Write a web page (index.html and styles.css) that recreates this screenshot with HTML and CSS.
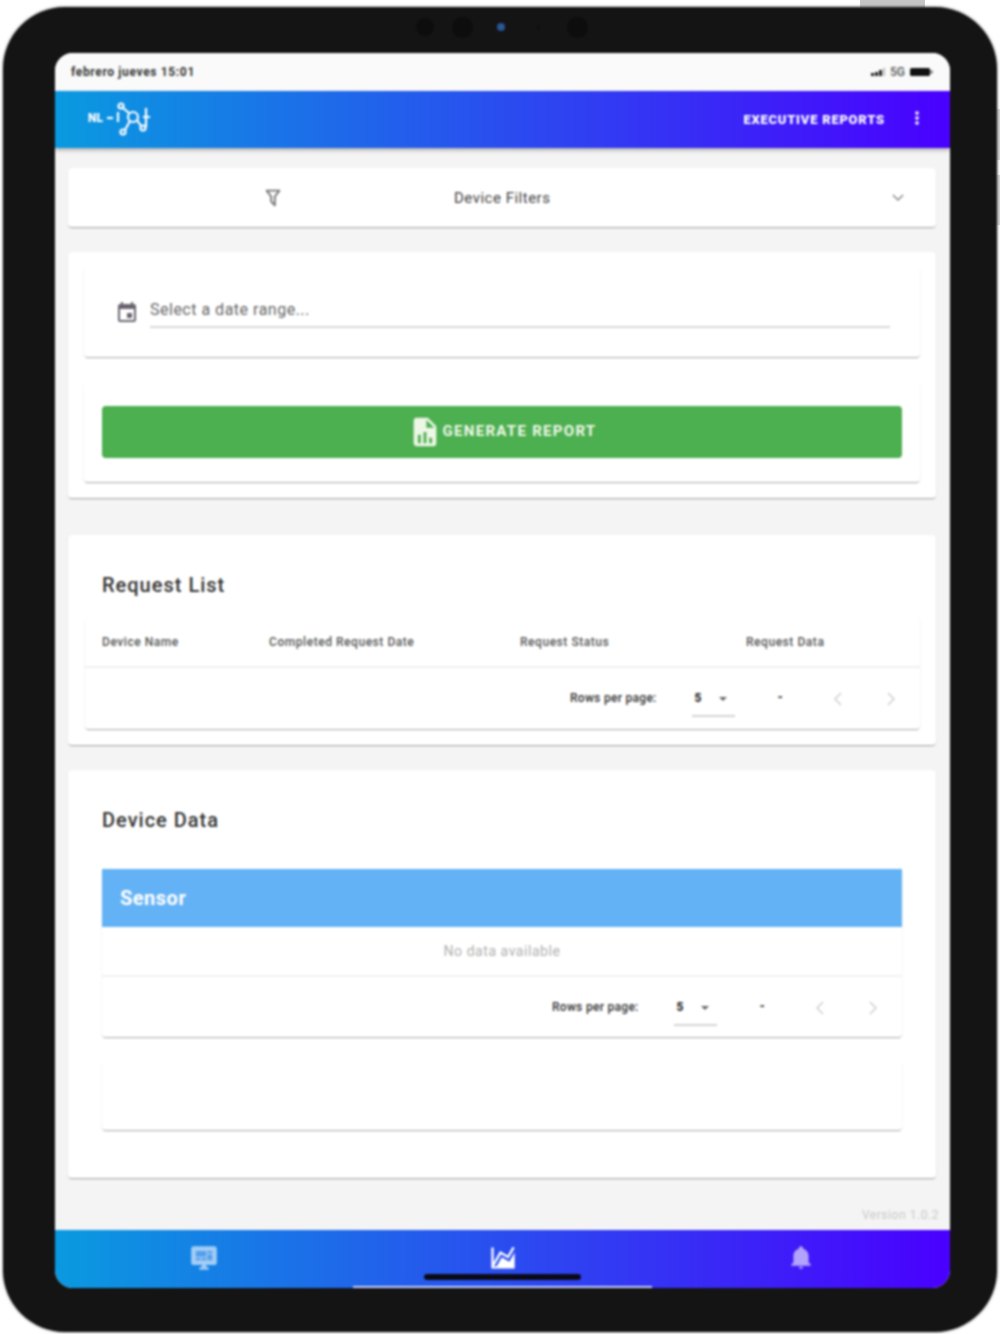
FILE: index.html
```html
<!DOCTYPE html>
<html lang="en">
<head>
    <meta charset="UTF-8">
    <meta name="viewport" content="width=device-width, initial-scale=1.0">
    <title>Executive Reports</title>
    <link rel="stylesheet" href="styles.css">
</head>
<body>
    <div class="btn-top"></div>
    <div class="btn-side btn-side-a"></div>
    <div class="btn-side btn-side-b"></div>

    <div class="tablet">
        <div class="camera">
            <span class="lens lens-left"></span>
            <span class="lens lens-mid"></span>
            <span class="lens-blue"></span>
            <span class="lens-tiny"></span>
            <span class="lens lens-right"></span>
        </div>

        <div class="screen">
            <div class="status-bar">
                <span>febrero jueves 15:01</span>
                <div class="status-right">
                    <svg class="signal" viewBox="0 0 14 8" width="14" height="8"><path d="M0 5h3v3H0zM4 4h3v4H4zM8 2h3v6H8z" fill="#222"/><path d="M12 0h2v8h-2z" fill="#bbb"/></svg>
                    <span class="five-g">5G</span>
                    <svg viewBox="0 0 23 8" width="23" height="8"><rect width="20" height="8" rx="1.5" fill="#111"/><rect x="20.5" y="2.5" width="2" height="3" fill="#555"/></svg>
                </div>
            </div>

            <header class="app-bar">
                <div class="logo">
                    <span class="logo-nl">NL</span>
                    <svg viewBox="0 0 48 36" width="48" height="36" fill="none" stroke="#fff" stroke-width="2.2">
                        <path d="M3 18h6"/>
                        <path d="M14 12v10"/>
                        <circle cx="17" cy="6" r="2.5"/>
                        <circle cx="29" cy="17" r="5"/>
                        <circle cx="19" cy="32" r="2.5"/>
                        <circle cx="39" cy="28" r="2.5"/>
                        <path d="M19 8l6 5M26 21l-5 9M33 20l4 6M42 8v19M39 17h7"/>
                    </svg>
                </div>
                <div class="app-bar-right">
                    <span class="app-title">EXECUTIVE REPORTS</span>
                    <svg class="menu-dots" viewBox="0 0 4 14" width="4" height="14" fill="#fff"><circle cx="2" cy="2" r="1.8"/><circle cx="2" cy="7" r="1.8"/><circle cx="2" cy="12" r="1.8"/></svg>
                </div>
            </header>

            <main class="content">
                <section class="card filter-panel">
                    <svg class="filter-icon" viewBox="0 0 24 24" width="22" height="22"><path fill="#757575" d="M15,19.88C15.04,20.18 14.94,20.5 14.71,20.71C14.32,21.1 13.69,21.1 13.3,20.71L9.29,16.7C9.06,16.47 8.96,16.16 9,15.87V10.75L4.21,4.62C3.87,4.19 3.95,3.56 4.38,3.22C4.57,3.08 4.78,3 5,3V3H19V3C19.22,3 19.43,3.08 19.62,3.22C20.05,3.56 20.13,4.19 19.79,4.62L15,10.75V19.88M7.04,5L11,10.06V15.58L13,17.58V10.05L16.96,5H7.04Z"/></svg>
                    <span class="filter-label">Device Filters</span>
                    <svg class="filter-chevron" viewBox="0 0 12 8" width="12" height="8" fill="none" stroke="#8a8a8a" stroke-width="1.5"><path d="M1 1l5 5 5-5"/></svg>
                </section>

                <section class="card report-card">
                    <div class="card date-card">
                        <svg viewBox="0 0 24 24" width="24" height="24"><path fill="#6b6470" d="M17 12h-5v5h5v-5zM16 1v2H8V1H6v2H5c-1.11 0-1.99.9-1.99 2L3 19c0 1.1.89 2 2 2h14c1.1 0 2-.9 2-2V5c0-1.1-.9-2-2-2h-1V1h-2zm3 18H5V8h14v11z"/></svg>
                        <div class="date-field">Select a date range...</div>
                    </div>
                    <div class="card button-card">
                        <button class="generate-btn">
                            <svg viewBox="0 0 24 24" width="34" height="34"><path fill="#eef7e6" d="M13,9H18.5L13,3.5V9M6,2H14L20,8V20A2,2 0 0,1 18,22H6C4.89,22 4,21.1 4,20V4C4,2.89 4.89,2 6,2M7,20H9V14H7V20M11,20H13V12H11V20M15,20H17V16H15V20Z"/></svg>
                            <span>GENERATE REPORT</span>
                        </button>
                    </div>
                </section>

                <section class="card request-card">
                    <h2>Request List</h2>
                    <div class="card table-card">
                        <div class="request-head">
                            <span>Device Name</span>
                            <span>Completed Request Date</span>
                            <span>Request Status</span>
                            <span>Request Data</span>
                        </div>
                        <div class="table-footer">
                            <span class="rows-label">Rows per page:</span>
                            <div class="rows-select"><span>5</span><i class="select-arrow"></i></div>
                            <span class="page-range">-</span>
                            <svg class="page-prev" viewBox="0 0 8 14" width="8" height="14" fill="none" stroke="#cfcfcf" stroke-width="1.5"><path d="M7 1L1 7l6 6"/></svg>
                            <svg class="page-next" viewBox="0 0 8 14" width="8" height="14" fill="none" stroke="#cfcfcf" stroke-width="1.5"><path d="M1 1l6 6-6 6"/></svg>
                        </div>
                    </div>
                </section>

                <section class="card data-card">
                    <h2>Device Data</h2>
                    <div class="card sensor-table">
                        <div class="sensor-head">Sensor</div>
                        <div class="no-data">No data available</div>
                        <div class="table-footer">
                            <span class="rows-label">Rows per page:</span>
                            <div class="rows-select"><span>5</span><i class="select-arrow"></i></div>
                            <span class="page-range">-</span>
                            <svg class="page-prev" viewBox="0 0 8 14" width="8" height="14" fill="none" stroke="#cfcfcf" stroke-width="1.5"><path d="M7 1L1 7l6 6"/></svg>
                            <svg class="page-next" viewBox="0 0 8 14" width="8" height="14" fill="none" stroke="#cfcfcf" stroke-width="1.5"><path d="M1 1l6 6-6 6"/></svg>
                        </div>
                    </div>
                    <div class="card blank-card"></div>
                </section>

                <div class="version">Version 1.0.2</div>
            </main>

            <nav class="bottom-nav">
                <a class="nav-item">
                    <svg viewBox="0 0 24 24" width="28" height="28"><path d="M21,2H3C1.89,2 1,2.9 1,4V16C1,17.1 1.89,18 3,18H10V20H8V22H16V20H14V18H21C22.1,18 23,17.1 23,16V4C23,2.9 22.1,2 21,2Z" fill="#fff"/><path d="M5,6H14V11H5V6M15,6H19V8H15V6M15,9H19V14H15V9M5,12H9V14H5V12M10,12H14V14H10V12Z" fill="#7fb4f0"/></svg>
                </a>
                <a class="nav-item active">
                    <svg viewBox="0 0 24 24" width="28" height="28"><path fill="#fff" d="M17.45,15.18L22,7.31V19L22,21H2V3H4V15.54L9.5,6L16,9.78L20.24,2.45L21.97,3.45L16.74,12.5L10.23,8.75L4.31,19H6.57L10.96,11.44L17.45,15.18Z"/></svg>
                </a>
                <a class="nav-item">
                    <svg viewBox="0 0 24 24" width="26" height="26"><path fill="#fff" d="M21,19V20H3V19L5,17V11C5,7.9 7.03,5.17 10,4.29C10,4.19 10,4.1 10,4A2,2 0 0,1 12,2A2,2 0 0,1 14,4C14,4.1 14,4.19 14,4.29C16.97,5.17 19,7.9 19,11V17L21,19M14,21A2,2 0 0,1 12,23A2,2 0 0,1 10,21"/></svg>
                </a>
                <div class="home-bar"></div>
            </nav>
        </div>
    </div>
</body>
</html>
```

FILE: styles.css
```css
* {
    box-sizing: border-box;
    margin: 0;
    padding: 0;
    font-family: Roboto, "Liberation Sans", sans-serif;
}

body {
    background-color: white;
    width: 1000px;
    height: 1334px;
    overflow: hidden;
    padding: 7px 3px 2px;
}

/* hardware buttons poking out of the frame */
.btn-top {
    position: absolute;
    left: 860px;
    top: 0;
    width: 65px;
    height: 8px;
    background-color: #c4c4c4;
}

.btn-side {
    position: absolute;
    left: 996px;
    width: 4px;
    background-color: #d8d8d8;
}

.btn-side-a {
    top: 109px;
    height: 51px;
}

.btn-side-b {
    top: 175px;
    height: 50px;
}

/* the reference is a soft, upscaled capture */
.tablet {
    position: relative;
    width: 994px;
    height: 1325px;
    background-color: #141414;
    border-radius: 62px;
    box-shadow: 0 0 3px #8a8a8a;
    padding: 46px 47px 44px 52px;
    filter: blur(0.8px);
}

.camera {
    position: absolute;
    top: 9px;
    left: 413px;
    height: 22px;
    display: flex;
    align-items: center;
}

.camera span {
    border-radius: 50%;
    background-color: #0d0d0d;
}

.lens {
    width: 21px;
    height: 21px;
}

.lens-left {
    width: 18px;
    height: 18px;
}

.lens-mid {
    margin-left: 18px;
}

.camera .lens-blue {
    width: 8px;
    height: 8px;
    margin-left: 24px;
    background-color: #2a5599;
}

.lens-tiny {
    width: 3px;
    height: 3px;
    margin-left: 32px;
}

.lens-right {
    margin-left: 27px;
}

.screen {
    height: 100%;
    background-color: #f4f4f4;
    border-radius: 18px;
    overflow: hidden;
    display: flex;
    flex-direction: column;
}

.status-bar {
    height: 38px;
    flex-shrink: 0;
    background-color: #fafafa;
    display: flex;
    justify-content: space-between;
    align-items: center;
    padding: 0 17px 0 16px;
    font-size: 12px;
    font-weight: 700;
    letter-spacing: 0.65px;
    color: #333;
}

.status-right {
    display: flex;
    align-items: center;
    gap: 5px;
}

.five-g {
    font-weight: 500;
    letter-spacing: 0;
    color: #555;
}

.app-bar {
    height: 57px;
    flex-shrink: 0;
    background: linear-gradient(90deg, #0a9ae0, #4a00ff);
    box-shadow: 0 2px 4px rgba(0, 0, 0, 0.3);
    display: flex;
    justify-content: space-between;
    align-items: center;
    padding: 0 31px 0 33px;
    position: relative;
    color: white;
}

.logo {
    display: flex;
    align-items: center;
    margin-bottom: 4px;
}

.logo-nl {
    width: 16px;
    font-size: 12px;
    font-weight: 900;
}

.app-bar-right {
    display: flex;
    align-items: center;
    gap: 30px;
}

.app-title {
    font-size: 13px;
    font-weight: 900;
    letter-spacing: 0.75px;
}

.menu-dots {
    margin-bottom: 3px;
}

.content {
    flex: 1;
    padding: 20px 14px 0 13px;
    display: flex;
    flex-direction: column;
}

.card {
    background-color: white;
    border-radius: 4px;
    box-shadow: 0 2px 1px -1px rgba(0, 0, 0, 0.25), 0 1px 2px rgba(0, 0, 0, 0.12);
}

.filter-panel {
    height: 59px;
    display: grid;
    grid-template-columns: 1fr 96px 1fr;
    align-items: center;
    padding: 0 32px;
    font-size: 15px;
    color: #444;
}

.filter-icon {
    justify-self: center;
    margin-right: 8px;
}

.filter-label {
    white-space: nowrap;
    letter-spacing: 0.5px;
}

.filter-chevron {
    justify-self: end;
}

.report-card {
    margin-top: 25px;
    height: 246px;
    padding: 16px;
}

.date-card {
    height: 89px;
    display: flex;
    align-items: center;
    padding: 0 30px 0 31px;
    gap: 11px;
}

.date-field {
    flex: 1;
    height: 32px;
    margin-bottom: 2px;
    padding-top: 4px;
    border-bottom: 2px solid #d8d8d8;
    font-size: 16px;
    color: #666;
    letter-spacing: 0.5px;
}

.button-card {
    margin-top: 25px;
    height: 100px;
    padding: 24px 18px;
}

.generate-btn {
    width: 100%;
    height: 52px;
    background-color: #4caf50;
    color: #f1f8e9;
    border: none;
    border-radius: 4px;
    font-size: 15px;
    font-weight: 700;
    letter-spacing: 1.3px;
    display: flex;
    justify-content: center;
    align-items: center;
    gap: 1px;
}

.generate-btn span {
    margin-bottom: 2px;
}

h2 {
    font-size: 20px;
    font-weight: 500;
    color: #333;
    letter-spacing: 1px;
    line-height: 24px;
}

.request-card {
    margin-top: 37px;
    height: 210px;
    padding: 38px 16px 16px;
}

.request-card h2 {
    padding-left: 18px;
}

.table-card {
    margin-top: 21px;
    margin-left: 1px;
    height: 111px;
}

.request-head {
    height: 50px;
    border-bottom: 2px solid #f0f0f0;
    display: grid;
    grid-template-columns: 167px 251px 226px 1fr;
    align-items: center;
    padding-left: 17px;
    font-size: 12px;
    font-weight: 500;
    letter-spacing: 0.55px;
    color: #555;
    white-space: nowrap;
}

.table-footer {
    height: 60px;
    display: flex;
    justify-content: flex-end;
    align-items: center;
    padding-right: 25px;
    font-size: 12px;
    font-weight: 500;
    color: #333;
}

.rows-label {
    letter-spacing: 0.3px;
}

.rows-select {
    width: 43px;
    height: 38px;
    margin-left: 35px;
    padding: 12px 0 0 3px;
    border-bottom: 2px solid #d4d4d4;
    font-weight: 900;
    display: flex;
    gap: 17px;
}

.select-arrow {
    margin-top: 6px;
    width: 0;
    height: 0;
    border-left: 4px solid transparent;
    border-right: 4px solid transparent;
    border-top: 4px solid #666;
}

.page-range {
    margin-left: 43px;
    margin-bottom: 3px;
    font-weight: 900;
}

.page-prev {
    margin-left: 51px;
    margin-top: 2px;
}

.page-next {
    margin-left: 45px;
    margin-top: 2px;
}

.data-card {
    margin-top: 25px;
    height: 408px;
    padding: 38px 34px 0;
}

.sensor-table {
    margin-top: 37px;
}

.sensor-head {
    height: 58px;
    background-color: #64b2f6;
    display: flex;
    align-items: center;
    padding-left: 18px;
    font-size: 20px;
    font-weight: 700;
    letter-spacing: 0.5px;
    color: white;
}

.no-data {
    height: 50px;
    border-bottom: 2px solid #f2f2f2;
    display: flex;
    justify-content: center;
    align-items: center;
    font-size: 14px;
    letter-spacing: 0.55px;
    color: #b0b0b0;
}

.blank-card {
    margin-top: 25px;
    height: 68px;
}

.version {
    margin-top: 30px;
    margin-right: -3px;
    text-align: right;
    font-size: 12px;
    letter-spacing: 0.55px;
    color: #cacaca;
}

.bottom-nav {
    height: 58px;
    flex-shrink: 0;
    background: linear-gradient(90deg, #0a9ae0, #4a00ff);
    display: grid;
    grid-template-columns: 298px 299px 298px;
    position: relative;
}

.nav-item {
    display: flex;
    justify-content: center;
    padding-top: 14px;
    opacity: 0.6;
    border-bottom: 2px solid transparent;
}

.nav-item.active {
    opacity: 1;
    border-bottom-color: #c8d0ff;
}

.home-bar {
    position: absolute;
    left: 369px;
    top: 44px;
    width: 157px;
    height: 6px;
    border-radius: 3px;
    background-color: #0a0a14;
}
```
